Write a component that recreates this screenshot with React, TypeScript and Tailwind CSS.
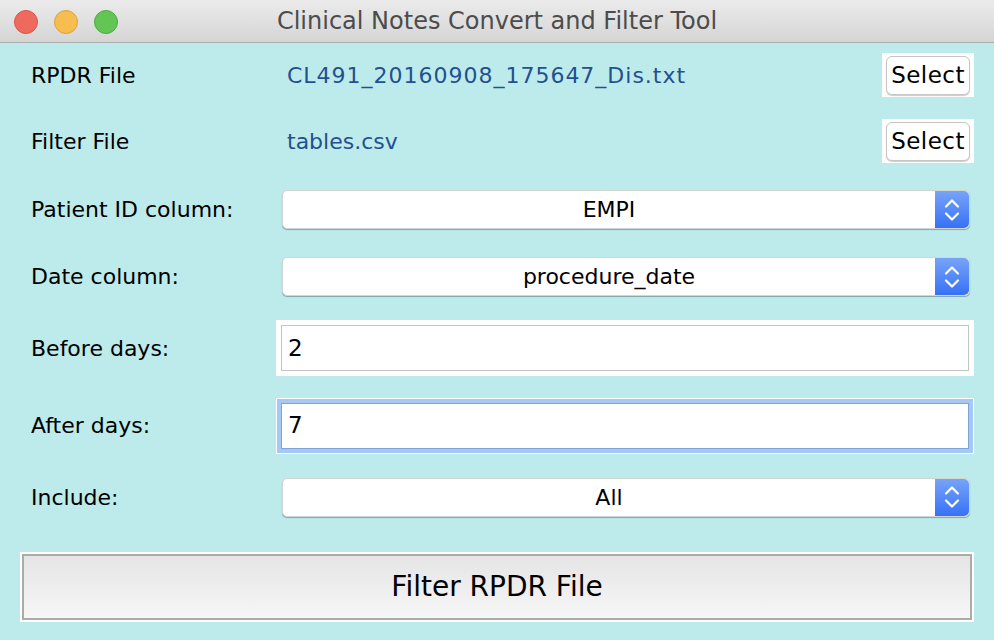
import React from 'react';

const FONT = { fontFamily: '"DejaVu Sans", "Liberation Sans", sans-serif' };

function Stepper() {
  return (
    <div className="flex h-full w-[34px] items-center justify-center rounded-r-[5px] bg-gradient-to-b from-[#77a3f8] to-[#3770f5]">
      <svg width="18" height="28" viewBox="0 0 18 28" fill="none">
        <path d="M3 10.5 L9 4.5 L15 10.5" stroke="white" strokeWidth="2.2" strokeLinecap="round" strokeLinejoin="round" />
        <path d="M3 17.5 L9 23.5 L15 17.5" stroke="white" strokeWidth="2.2" strokeLinecap="round" strokeLinejoin="round" />
      </svg>
    </div>
  );
}

function Combo({ value }: { value: string }) {
  return (
    <div className="ml-[6px] mr-[4px] flex h-[39px] flex-1 items-stretch rounded-[5px] border border-[#cfd6d6] bg-white shadow-[0_1px_1px_rgba(0,0,0,0.3)]">
      <div className="flex flex-1 items-center justify-center text-[22px] text-black">{value}</div>
      <Stepper />
    </div>
  );
}

function SelectButton() {
  return (
    <div className="ml-auto flex h-[44px] w-[92px] items-center justify-center bg-white">
      <button
        type="button"
        className="flex h-[39px] w-[84px] items-center justify-center rounded-[6px] border border-[#c6c6c6] bg-white text-[23px] tracking-[0.02em] text-black shadow-[0_1px_1px_rgba(0,0,0,0.2)]"
      >
        Select
      </button>
    </div>
  );
}

function NumberField({ value, focused }: { value: string; focused?: boolean }) {
  return (
    <div className="flex h-[56px] flex-1 items-stretch bg-white p-[5px]">
      <div
        className={
          focused
            ? 'flex flex-1 items-center border border-[#7ea4d8] pl-[6px] text-[23px] text-black ring-4 ring-[#a6c8f4]'
            : 'flex flex-1 items-center border border-[#c4c4c4] pl-[6px] text-[23px] text-black'
        }
      >
        {value}
      </div>
    </div>
  );
}

function Row({ label, className, children }: { label: string; className: string; children: React.ReactNode }) {
  return (
    <div className={`flex items-center pl-[31px] pr-[20px] ${className}`}>
      <div className="w-[245px] shrink-0 text-[22px] text-black">{label}</div>
      <div className="flex h-full flex-1 items-center">{children}</div>
    </div>
  );
}

export default function App() {
  return (
    <div className="flex h-[640px] w-[994px] flex-col overflow-hidden bg-[#bdebeb]" style={FONT}>
      {/* title bar */}
      <div className="relative flex h-[43px] shrink-0 items-center justify-center border-b border-[#aeaeae] bg-gradient-to-b from-[#ebebeb] to-[#d5d5d5]">
        <div className="absolute left-[14px] top-[10px] flex gap-[16px]">
          <span className="h-[24px] w-[24px] rounded-full border border-[#d8574c] bg-[#ee6a5f]" />
          <span className="h-[24px] w-[24px] rounded-full border border-[#dca33b] bg-[#f5be4f]" />
          <span className="h-[24px] w-[24px] rounded-full border border-[#50a843] bg-[#62c554]" />
        </div>
        <span className="text-[24px] text-[#4c4c4c]">Clinical Notes Convert and Filter Tool</span>
      </div>

      <Row label="RPDR File" className="mt-[10px] h-[44px]">
        <span className="pl-[11px] text-[22px] tracking-[0.045em] text-[#23508f]">CL491_20160908_175647_Dis.txt</span>
        <SelectButton />
      </Row>

      <Row label="Filter File" className="mt-[22px] h-[44px]">
        <span className="pl-[11px] text-[22px] text-[#23508f]">tables.csv</span>
        <SelectButton />
      </Row>

      <Row label="Patient ID column:" className="mt-[27px] h-[39px]">
        <Combo value="EMPI" />
      </Row>

      <Row label="Date column:" className="mt-[28px] h-[39px]">
        <Combo value="procedure_date" />
      </Row>

      <Row label="Before days:" className="mt-[24px] h-[56px]">
        <NumberField value="2" />
      </Row>

      <Row label="After days:" className="mt-[22px] h-[55px]">
        <NumberField value="7" focused />
      </Row>

      <Row label="Include:" className="mt-[24px] h-[40px]">
        <Combo value="All" />
      </Row>

      <div className="mx-[20px] mt-[35px] h-[70px] bg-white p-[2px]">
        <button
          type="button"
          className="flex h-full w-full items-center justify-center border-2 border-[#ababab] bg-gradient-to-b from-[#e5e5e5] to-[#f6f6f6] text-[28px] text-black"
        >
          Filter RPDR File
        </button>
      </div>
    </div>
  );
}
